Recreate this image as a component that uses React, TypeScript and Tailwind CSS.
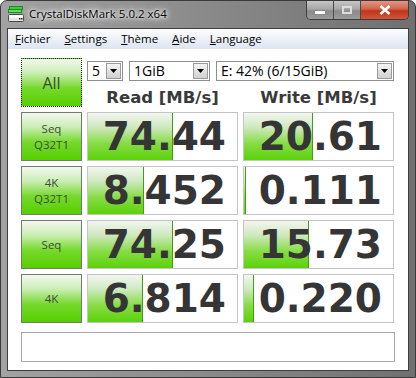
import React from "react";

const rows = [
  { label: ["Seq", "Q32T1"], read: "74.44", rw: 85, write: "20.61", ww: 69 },
  { label: ["4K", "Q32T1"], read: "8.452", rw: 56, write: "0.111", ww: 2 },
  { label: ["Seq"], read: "74.25", rw: 85, write: "15.73", ww: 65 },
  { label: ["4K"], read: "6.814", rw: 55, write: "0.220", ww: 10 },
];

const ui = { fontFamily: '"Open Sans", "Noto Sans", sans-serif' };
const big = { fontFamily: '"DejaVu Sans", "Verdana", sans-serif' };

function Arrow() {
  return (
    <div className="my-[1px] mr-[1px] ml-auto flex w-[15px] items-center justify-center border border-[#9a9a9a] bg-[linear-gradient(to_bottom,#f4f4f4,#e2e2e2_50%,#d0d0d0)]">
      <svg width="7" height="4" viewBox="0 0 7 4">
        <path d="M0 0H7L3.5 4Z" fill="#000" />
      </svg>
    </div>
  );
}

function Combo({ cls, text }: { cls: string; text: string }) {
  return (
    <div className={`flex h-[20px] items-stretch border border-[#8e8f8f] bg-white ${cls}`}>
      <span className="pl-[4px] text-[14px] leading-[18px] text-black" style={ui}>
        {text}
      </span>
      <Arrow />
    </div>
  );
}

function LabelBtn({ lines, all }: { lines: string[]; all?: boolean }) {
  return (
    <div
      className={`flex flex-col items-center justify-center border ${
        all ? "border-dotted border-[#222]" : "border-[#6f7d6a]"
      } bg-[linear-gradient(to_bottom,#f2f8ee_0%,#cbedb4_30%,#76d92c_62%,#56cf00_100%)]`}
      style={ui}
    >
      {lines.map((l) => (
        <span
          key={l}
          className={all ? "text-[16px] leading-[20px] text-[#3d4a36]" : "text-[11.5px] leading-[16px] text-[#3d4d36]"}
        >
          {l}
        </span>
      ))}
    </div>
  );
}

function Value({ v, w }: { v: string; w: number }) {
  return (
    <div className="relative flex items-center justify-end border border-[#c4c4c4] bg-white pr-[11px]">
      <div
        className="absolute top-0 bottom-0 left-0 border-r border-[#3f9e14] bg-[linear-gradient(to_bottom,#f2f6f0_0%,#cfe9c0_30%,#86dc44_65%,#5cd20a_100%)]"
        style={{ width: w }}
      />
      <span className="relative text-[39px] leading-none font-bold text-[#353535]" style={big}>
        {v}
      </span>
    </div>
  );
}

function DriveIcon() {
  return (
    <svg width="16" height="16" viewBox="0 0 16 16">
      <rect x="1.5" y="0.5" width="13" height="3" fill="#3ccf3c" stroke="#1d8a1d" />
      <rect x="0.5" y="3.5" width="13" height="3" fill="#5ee05e" stroke="#1d8a1d" />
      <rect x="0.5" y="8.5" width="15" height="7" rx="1" fill="#e6e6e6" stroke="#4a4a4a" />
      <rect x="1.5" y="9.5" width="13" height="2" fill="#ffffff" />
      <rect x="11" y="12" width="1.5" height="1.5" fill="#2a2a2a" />
      <rect x="13" y="12" width="1.5" height="1.5" fill="#2a2a2a" />
    </svg>
  );
}

function CapBtn({ kind }: { kind: "min" | "max" | "close" }) {
  if (kind === "close")
    return (
      <div className="flex w-[47px] items-center justify-center bg-[linear-gradient(to_bottom,#e39888_0%,#d0624a_45%,#bf3418_55%,#d4553a_100%)]">
        <svg width="12" height="10" viewBox="0 0 12 10">
          <path d="M1.5 1L10.5 9M10.5 1L1.5 9" stroke="#fff" strokeWidth="2.6" />
        </svg>
      </div>
    );
  return (
    <div className="flex w-[27px] items-center justify-center border-r border-[#4a4a4a] bg-[linear-gradient(to_bottom,#c6c6c6_0%,#a6a6a6_45%,#8a8a8a_55%,#9c9c9c_100%)]">
      {kind === "min" ? (
        <div className="mt-[5px] h-[3px] w-[10px] bg-white shadow-[0_0_1px_#333]" />
      ) : (
        <div className="h-[8px] w-[10px] border-2 border-[#dcdcdc]" />
      )}
    </div>
  );
}

export default function App() {
  return (
    <div className="flex h-[378px] w-[416px] flex-col overflow-hidden rounded-t-[7px] border border-[#3a3a3a] bg-[linear-gradient(to_right,#a2a2a2,#8c8c8c_45%,#707070)]">
      <div className="flex h-[27px] shrink-0 items-start">
        <div className="mt-[5px] ml-[7px]">
          <DriveIcon />
        </div>
        <span
          className="mt-[4px] ml-[5px] text-[11.5px] leading-[18px] text-black [text-shadow:0_0_8px_#fff,0_0_6px_#fff,0_0_3px_#fff]"
          style={ui}
        >
          CrystalDiskMark 5.0.2 x64
        </span>
        <div className="mr-[6px] ml-auto flex h-[19px] overflow-hidden rounded-b-[5px] border border-t-0 border-[#3c3c3c]">
          <CapBtn kind="min" />
          <CapBtn kind="max" />
          <CapBtn kind="close" />
        </div>
      </div>
      <div className="flex flex-1 flex-col px-[6px] pb-[6px]">
        <div className="flex flex-1 flex-col border border-[#3e3e3e] bg-white">
          <div
            className="flex h-[20px] shrink-0 items-center gap-[14px] bg-[linear-gradient(to_bottom,#fcfdff,#e9eef6_60%,#dce4f0)] pl-[7px] text-[11.5px] text-black"
            style={ui}
          >
            <span><u>F</u>ichier</span>
            <span><u>S</u>ettings</span>
            <span><u>T</u>hème</span>
            <span><u>A</u>ide</span>
            <span><u>L</u>anguage</span>
          </div>
          <div className="flex flex-1 flex-col px-[13px] pt-[9px] pb-[8px]">
            <div className="grid grid-cols-[61px_151px_151px] grid-rows-[repeat(5,49px)] gap-[5px]">
              <LabelBtn lines={["All"]} all />
              <div className="col-span-2 flex flex-col">
                <div className="mt-[3px] flex gap-[6px]">
                  <Combo cls="w-[36px]" text="5" />
                  <Combo cls="w-[81px]" text="1GiB" />
                  <Combo cls="w-[178px]" text="E: 42% (6/15GiB)" />
                </div>
                <div
                  className="mt-[6px] grid h-[22px] grid-cols-2 gap-[5px] text-center text-[16.5px] leading-[22px] font-bold text-[#3a3a3a]"
                  style={big}
                >
                  <span>Read [MB/s]</span>
                  <span>Write [MB/s]</span>
                </div>
              </div>
              {rows.map((r) => (
                <React.Fragment key={r.read}>
                  <LabelBtn lines={r.label} />
                  <Value v={r.read} w={r.rw} />
                  <Value v={r.write} w={r.ww} />
                </React.Fragment>
              ))}
            </div>
            <div className="mt-[9px] h-[30px] border border-[#a8a8a8] bg-white" />
          </div>
        </div>
      </div>
    </div>
  );
}
